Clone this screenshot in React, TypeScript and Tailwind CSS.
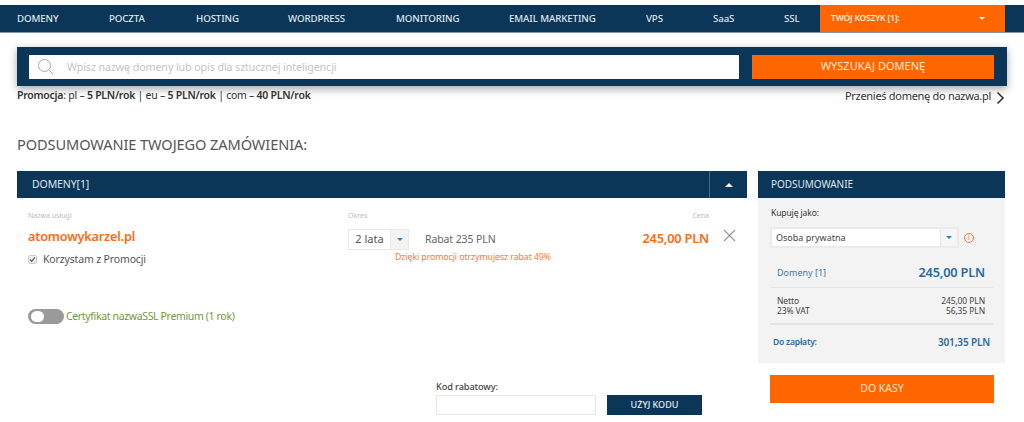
import React from "react";

const navy = "bg-[#0c3658]";
const font = { fontFamily: "'Noto Sans', sans-serif" };

function Caret({ className }: { className: string }) {
  return <span className={`block h-0 w-0 border-x-transparent ${className}`} />;
}

const nav: [string, string][] = [
  ["DOMENY", "w-[92px]"],
  ["POCZTA", "w-[87px]"],
  ["HOSTING", "w-[92px]"],
  ["WORDPRESS", "w-[108px]"],
  ["MONITORING", "w-[113px]"],
  ["EMAIL MARKETING", "w-[137px]"],
  ["VPS", "w-[67px]"],
  ["SaaS", "w-[71px]"],
  ["SSL", "w-[36px]"],
];

export default function App() {
  return (
    <div className="h-[422px] w-[1024px] overflow-hidden bg-white pt-[5px] text-[#444]" style={font}>
      <nav className={`${navy} flex h-[28px] items-center border-b border-[#7f95a8] pl-[17px]`}>
        {nav.map(([t, w]) => (
          <span key={t} className={`${w} shrink-0 pt-[1px] text-[9.7px] font-medium tracking-[-0.1px] whitespace-nowrap text-[#dfe6ec]`}>
            {t}
          </span>
        ))}
        <div className="flex h-full w-[185px] items-center justify-between bg-[#ff6600] pr-[20px] pl-[11px]">
          <span className="text-[8.5px] font-semibold tracking-[-0.2px] text-[#ffe9d8]">TWÓJ KOSZYK [1]:</span>
          <Caret className="border-x-[3.5px] border-t-[3.5px] border-t-white" />
        </div>
      </nav>

      <div className={`${navy} mx-[17px] mt-[14px] flex h-[39px] items-center gap-[13px] pr-[11px] pl-[12px] shadow-[0_3px_8px_rgba(0,0,0,0.35)]`}>
        <div className="flex h-[24px] w-[710px] items-center bg-white pl-[8px]">
          <svg width="17" height="17" viewBox="0 0 17 17" fill="none" stroke="#aaa" strokeWidth="1">
            <circle cx="7.5" cy="7.5" r="6" />
            <path d="M12 12l4 4" />
          </svg>
          <span className="ml-[13px] pt-[1px] text-[10.7px] tracking-[-0.1px] text-[#c4c4c4]">
            Wpisz nazwę domeny lub opis dla sztucznej inteligencji
          </span>
        </div>
        <div className="flex h-[24px] w-[242px] items-center justify-center bg-[#ff6600] text-[11px] text-[#ffe9d8]">
          WYSZUKAJ DOMENĘ
        </div>
      </div>

      <div className="mx-[17px] mt-[1px] flex h-[18px] items-center justify-between">
        <p className="text-[10.5px] tracking-[-0.25px] text-[#333]">
          <b className="font-semibold">Promocja</b>: pl – <b className="font-semibold">5 PLN/rok</b> | eu – <b className="font-semibold">5 PLN/rok</b> | com – <b className="font-semibold">40 PLN/rok</b>
        </p>
        <div className="mr-[2px] flex items-center gap-[5px]">
          <span className="text-[11px] tracking-[-0.3px] text-[#333]">Przenieś domenę do nazwa.pl</span>
          <svg width="9" height="14" viewBox="0 0 9 14" fill="none" stroke="#333" strokeWidth="1.6" className="mt-[4px]">
            <path d="M1.5 1.5L7 7l-5.500 5.500" />
          </svg>
        </div>
      </div>

      <h1 className="mx-[17px] mt-[29px] text-[14.6px] leading-[20px] tracking-[-0.1px] text-[#555]">
        PODSUMOWANIE TWOJEGO ZAMÓWIENIA:
      </h1>

      <div className="mx-[17px] mt-[17px] flex items-start gap-[11px]">
        <section className="w-[730px]">
          <div className={`${navy} flex h-[27px] items-center justify-between`}>
            <span className="pl-[15px] text-[10.500px] tracking-[-0.1px] text-[#dde5ec]">DOMENY[1]</span>
            <span className="flex h-full w-[38px] items-center justify-center border-l border-[#4a6a84]">
              <Caret className="border-x-[4px] border-b-[4px] border-b-white" />
            </span>
          </div>

          <div className="flex pt-[13px] pl-[11px]">
            <div className="w-[320px]">
              <div className="text-[7px] leading-[10px] text-[#bbb]">Nazwa usługi</div>
              <div className="mt-[5px] text-[12.7px] leading-[20px] font-semibold tracking-[-0.2px] text-[#ff6a13]">atomowykarzel.pl</div>
              <label className="mt-[5px] flex items-center gap-[6px] text-[10.500px] leading-[16px] tracking-[-0.15px] text-[#555]">
                <span className="flex h-[9px] w-[9px] items-center justify-center rounded-[2px] border border-[#ccc] bg-[#eee]">
                  <svg width="7" height="7" viewBox="0 0 7 7" fill="none" stroke="#555" strokeWidth="1.1"><path d="M1 3.500l1.700 1.800L6 1.300" /></svg>
                </span>
                Korzystam z Promocji
              </label>
              <div className="mt-[42px] flex items-center gap-[2px]">
                <span className="flex h-[15px] w-[36px] items-center rounded-full bg-[#9a9a9a] pl-[3px]">
                  <span className="h-[11px] w-[13px] rounded-full bg-white" />
                </span>
                <span className="text-[10.500px] tracking-[-0.35px] text-[#6f9a3b]">Certyfikat nazwaSSL Premium (1 rok)</span>
              </div>
            </div>

            <div className="relative w-[293px]">
              <div className="text-[7px] leading-[10px] text-[#bbb]">Okres</div>
              <div className="mt-[8px] flex items-center">
                <div className="flex h-[21px] w-[61px] border border-[#e8e8e8]">
                  <span className="flex w-[41px] items-center justify-center text-[11px] text-[#555]">2 lata</span>
                  <span className="flex flex-1 items-center justify-center border-l border-[#e8e8e8] bg-[#f4f4f4]">
                    <Caret className="border-x-[3px] border-t-[3px] border-t-[#3b82b8]" />
                  </span>
                </div>
                <span className="ml-[16px] text-[10.500px] tracking-[-0.1px] text-[#666]">Rabat 235 PLN</span>
              </div>
              <div className="mt-[1px] pl-[47px] text-[8.8px] leading-[12px] tracking-[-0.1px] text-[#ff7a33]">
                Dzięki promocji otrzymujesz rabat 49%
              </div>
            </div>

            <div className="w-[68px]">
              <div className="text-right text-[7px] leading-[10px] text-[#bbb]">Cena</div>
              <div className="mt-[7px] text-right text-[12.8px] leading-[20px] font-semibold tracking-[-0.2px] whitespace-nowrap text-[#ff6a13]">245,00 PLN</div>
            </div>
            <svg width="13" height="13" viewBox="0 0 13 13" fill="none" stroke="#999" strokeWidth="1.2" className="mt-[18px] ml-[14px]">
              <path d="M1 1l11 11M12 1L1 12" />
            </svg>
          </div>

          <div className="mt-[55px] ml-[419px] flex items-end gap-[11px]">
            <div>
              <div className="text-[9.2px] leading-[14px] font-medium tracking-[-0.1px] text-[#444]">Kod rabatowy:</div>
              <div className="mt-[1px] h-[20px] w-[160px] border border-[#e5e5e5] bg-white" />
            </div>
            <div className={`${navy} flex h-[20px] w-[95px] items-center justify-center text-[9px] font-medium text-[#e5ebf0]`}>UŻYJ KODU</div>
          </div>
        </section>

        <aside className="w-[247px]">
          <div className="bg-[#f3f3f3]">
            <div className={`${navy} flex h-[27px] items-center pl-[13px] text-[10px] tracking-[-0.05px] text-[#dde5ec]`}>PODSUMOWANIE</div>
            <div className="pt-[8px] pr-[12px] pb-[13px] pl-[12px]">
              <div className="pl-[1px] text-[8.500px] leading-[14px] tracking-[-0.1px] text-[#333]">Kupuję jako:</div>
              <div className="mt-[7px] flex items-center gap-[5px]">
                <div className="flex h-[21px] w-[189px] border-2 border-[#ebebeb] bg-white">
                  <span className="flex flex-1 items-center pl-[4px] text-[9px] text-[#444]">Osoba prywatna</span>
                  <span className="flex w-[17px] items-center justify-center border-l border-[#e5e5e5] bg-[#f6f6f6]">
                    <Caret className="border-x-[3px] border-t-[3px] border-t-[#3b82b8]" />
                  </span>
                </div>
                <span className="flex h-[10px] w-[10px] items-center justify-center rounded-full border border-[#f0763c] text-[7px] leading-none text-[#f0763c]">i</span>
              </div>
              <div className="mt-[11px] flex h-[29px] items-center justify-between border-b border-[#e4e4e4] pr-[8px] pl-[7px]">
                <span className="text-[9px] text-[#3f78a8]">Domeny [1]</span>
                <span className="text-[12.8px] font-semibold tracking-[-0.2px] text-[#2c6a9e]">245,00 PLN</span>
              </div>
              <div className="flex h-[37px] items-center justify-between border-b-2 border-[#e4e4e4] pr-[8px] pl-[7px] text-[8.500px] leading-[10px] tracking-[-0.1px] text-[#444]">
                <div>Netto<br />23% VAT</div>
                <div className="text-right">245,00 PLN<br />56,35 PLN</div>
              </div>
              <div className="mt-[10px] flex items-center justify-between pr-[3px] pl-[3px]">
                <span className="text-[8.500px] font-semibold tracking-[-0.2px] text-[#2c6a9e]">Do zapłaty:</span>
                <span className="text-[10px] font-semibold tracking-[-0.15px] text-[#2c6a9e]">301,35 PLN</span>
              </div>
            </div>
          </div>
          <div className="mt-[12px] ml-[12px] flex h-[28px] w-[224px] items-center justify-center bg-[#ff6600] text-[10.500px] text-[#ffe4d0]">DO KASY</div>
        </aside>
      </div>
    </div>
  );
}
